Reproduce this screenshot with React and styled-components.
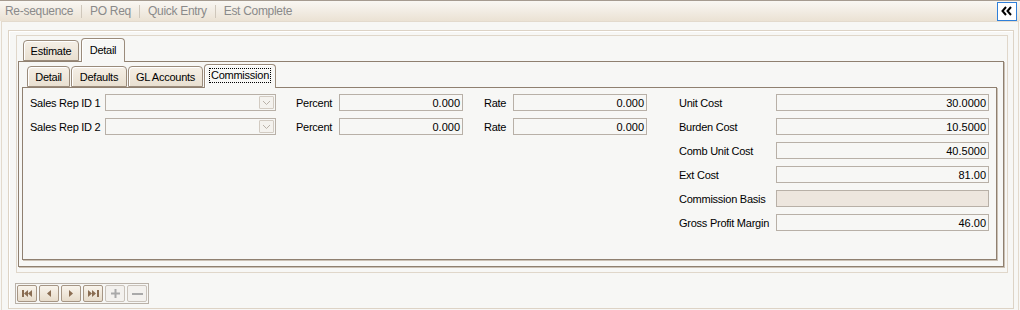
import * as React from "react"
import styled, { createGlobalStyle } from "styled-components"

const GlobalStyle = createGlobalStyle`
  html, body {
    margin: 0;
    padding: 0;
    background: #f7f7f5;
  }
  * {
    box-sizing: border-box;
  }
`

const Page = styled.div`
  width: 1020px;
  height: 310px;
  overflow: hidden;
  display: flex;
  flex-direction: column;
  background: #f7f7f5;
  font-family: "Liberation Sans", Arial, sans-serif;
  font-size: 11px;
  letter-spacing: -0.25px;
  color: #000;
`

const Toolbar = styled.div`
  height: 21px;
  flex: none;
  display: flex;
  align-items: center;
  padding-left: 5px;
  border-top: 1px solid #a59b90;
  background: linear-gradient(#f9f7f3, #ebe2d4);
  font-size: 12px;
  letter-spacing: -0.3px;
  color: #8a8a8a;
`

const ToolItem = styled.span`
  white-space: nowrap;
`

const ToolSep = styled.span`
  width: 1px;
  height: 13px;
  margin: 0 8px 0 8px;
  background: #cfc7bb;
`

const CollapseButton = styled.button`
  margin-left: auto;
  margin-right: 3px;
  width: 20px;
  height: 19px;
  padding: 0;
  display: flex;
  align-items: center;
  justify-content: center;
  border: 1px solid #2f7fd9;
  background: #ffffff;
`

const Frame = styled.div`
  flex: 1;
  margin: 0 1px;
  border: 1px solid #e3dacd;
  border-bottom: none;
  padding: 8px 4px 0 6px;
`

const GroupBox = styled.div`
  height: 279px;
  border: 1px solid #ddd3c5;
  box-shadow: inset 1px 1px 0 #ffffff;
  padding: 4px 5px 0 6px;
  display: flex;
  flex-direction: column;
`

const TabBox = styled.div`
  border: 1px solid #e0d7ca;
  margin-left: 1px;
  display: flex;
  flex-direction: column;
`

const TabStrip = styled.div`
  display: flex;
  align-items: flex-end;
  gap: ${(p) => p.$gap}px;
  padding-top: 2px;
  padding-left: ${(p) => p.$indent}px;
  position: relative;
  z-index: 1;
`

const Tab = styled.div`
  width: ${(p) => p.$w}px;
  height: ${(p) => (p.$active ? 24 : 21)}px;
  margin-bottom: ${(p) => (p.$active ? -1 : 0)}px;
  display: flex;
  align-items: center;
  justify-content: center;
  border: 1px solid #9a8b7b;
  border-bottom: ${(p) => (p.$active ? "none" : "1px solid #9a8b7b")};
  border-radius: 4px 4px 0 0;
  background: ${(p) =>
    p.$active ? "#f7f7f5" : "linear-gradient(#f5efe6, #e9e0d1)"};
  box-shadow: inset 1px 1px 0 #ffffff;
  padding-bottom: ${(p) => (p.$active ? 2 : 0)}px;
  white-space: nowrap;
`

const FocusLabel = styled.span`
  outline: 1px dotted #000;
  line-height: 13px;
  padding: 0 1px;
`

const TabPanel = styled.div`
  border: 1px solid #8f8070;
  box-shadow: 1px 1px 0 #cbc1b4;
  margin: ${(p) => p.$margin};
  padding: ${(p) => p.$pad};
  display: flex;
  flex-direction: column;
  background: #f7f7f5;
`

const Content = styled.div`
  height: 171px;
  padding: 6px 0 0 7px;
  display: flex;
  gap: 32px;
`

const LeftGrid = styled.div`
  display: grid;
  grid-template-columns: 75px 171px 63px 124px 50px 134px;
  grid-auto-rows: 17px;
  row-gap: 7px;
  align-content: start;
`

const RightGrid = styled.div`
  display: grid;
  grid-template-columns: 97px 213px;
  grid-auto-rows: 17px;
  row-gap: 7px;
  align-content: start;
`

const Label = styled.div`
  display: flex;
  align-items: center;
  padding-left: ${(p) => p.$indent || 0}px;
  white-space: nowrap;
`

const Field = styled.div`
  border: 1px solid #b8b0a7;
  background: ${(p) => (p.$filled ? "#ede6de" : "#f7f7f5")};
  display: flex;
  align-items: center;
  justify-content: flex-end;
  padding-right: 2px;
  white-space: nowrap;
  letter-spacing: 0;
`

const Combo = styled.div`
  border: 1px solid #b8b0a7;
  background: #f7f7f5;
  display: flex;
  align-items: center;
  justify-content: flex-end;
  padding-right: 1px;
`

const ComboButton = styled.div`
  width: 15px;
  height: 13px;
  border: 1px solid #d2cbc2;
  border-radius: 1px;
  background: #f4f2ee;
  display: flex;
  align-items: center;
  justify-content: center;
`

const NavGroup = styled.div`
  margin-top: 10px;
  align-self: flex-start;
  display: flex;
  gap: 2px;
  padding: 1px;
  border: 1px solid #b9b1a8;
`

const NavButton = styled.div`
  width: 20px;
  height: 17px;
  border: 1px solid ${(p) => (p.$disabled ? "#c9c2ba" : "#a69685")};
  border-radius: 2px;
  background: ${(p) =>
    p.$disabled ? "#f3f1ee" : "linear-gradient(#f9f4ec, #e7dccb)"};
  display: flex;
  align-items: center;
  justify-content: center;
`

const Chevron = () => (
  <svg width="9" height="6" viewBox="0 0 9 6">
    <path d="M1 1 L4.5 4.5 L8 1" fill="none" stroke="#b9b1a8" strokeWidth="1" />
  </svg>
)

const NavIcon = ({ kind }) => {
  const c = "#8a6d52"
  const g = "#a9a9a9"
  if (kind === "first")
    return (
      <svg width="11" height="7" viewBox="0 0 11 7">
        <rect x="0" y="0" width="2" height="7" fill={c} />
        <path d="M2 3.5 L6 0 L6 7 Z M6 3.5 L10 0 L10 7 Z" fill={c} />
      </svg>
    )
  if (kind === "prev")
    return (
      <svg width="4" height="7" viewBox="0 0 4 7">
        <path d="M0 3.5 L4 0 L4 7 Z" fill={c} />
      </svg>
    )
  if (kind === "next")
    return (
      <svg width="4" height="7" viewBox="0 0 4 7">
        <path d="M4 3.5 L0 0 L0 7 Z" fill={c} />
      </svg>
    )
  if (kind === "last")
    return (
      <svg width="11" height="7" viewBox="0 0 11 7">
        <path d="M8 3.5 L4 0 L4 7 Z M4 3.5 L0 0 L0 7 Z" fill={c} />
        <rect x="9" y="0" width="2" height="7" fill={c} />
      </svg>
    )
  if (kind === "add")
    return (
      <svg width="9" height="9" viewBox="0 0 9 9">
        <rect x="3.5" y="0" width="2" height="9" fill={g} />
        <rect x="0" y="3.5" width="9" height="2" fill={g} />
      </svg>
    )
  return (
    <svg width="11" height="2" viewBox="0 0 11 2">
      <rect x="0" y="0" width="11" height="2" fill={g} />
    </svg>
  )
}

const leftRows = [
  { label: "Sales Rep ID 1", percent: "0.000", rate: "0.000" },
  { label: "Sales Rep ID 2", percent: "0.000", rate: "0.000" },
]

const costRows = [
  { label: "Unit Cost", value: "30.0000" },
  { label: "Burden Cost", value: "10.5000" },
  { label: "Comb Unit Cost", value: "40.5000" },
  { label: "Ext Cost", value: "81.00" },
  { label: "Commission Basis", value: "", filled: true },
  { label: "Gross Profit Margin", value: "46.00" },
]

const App = () => (
  <Page>
    <GlobalStyle />
    <Toolbar>
      <ToolItem>Re-sequence</ToolItem>
      <ToolSep />
      <ToolItem>PO Req</ToolItem>
      <ToolSep />
      <ToolItem>Quick Entry</ToolItem>
      <ToolSep />
      <ToolItem>Est Complete</ToolItem>
      <CollapseButton>
        <svg width="12" height="10" viewBox="0 0 12 10">
          <path
            d="M5 1 L1.5 5 L5 9 M10 1 L6.5 5 L10 9"
            fill="none"
            stroke="#000"
            strokeWidth="2"
          />
        </svg>
      </CollapseButton>
    </Toolbar>
    <Frame>
      <GroupBox>
        <TabBox>
          <TabStrip $indent={6} $gap={2}>
            <Tab $w={56}>Estimate</Tab>
            <Tab $w={44} $active>
              Detail
            </Tab>
          </TabStrip>
          <TabPanel $margin="0 3px 5px 1px" $pad="0 6px 6px 3px">
            <TabStrip $indent={5} $gap={1}>
              <Tab $w={43}>Detail</Tab>
              <Tab $w={56}>Defaults</Tab>
              <Tab $w={75}>GL Accounts</Tab>
              <Tab $w={72} $active>
                <FocusLabel>Commission</FocusLabel>
              </Tab>
            </TabStrip>
            <TabPanel $margin="0" $pad="0">
              <Content>
                <LeftGrid>
                  {leftRows.map((r) => (
                    <React.Fragment key={r.label}>
                      <Label>{r.label}</Label>
                      <Combo>
                        <ComboButton>
                          <Chevron />
                        </ComboButton>
                      </Combo>
                      <Label $indent={20}>Percent</Label>
                      <Field>{r.percent}</Field>
                      <Label $indent={21}>Rate</Label>
                      <Field>{r.rate}</Field>
                    </React.Fragment>
                  ))}
                </LeftGrid>
                <RightGrid>
                  {costRows.map((r) => (
                    <React.Fragment key={r.label}>
                      <Label>{r.label}</Label>
                      <Field $filled={r.filled}>{r.value}</Field>
                    </React.Fragment>
                  ))}
                </RightGrid>
              </Content>
            </TabPanel>
          </TabPanel>
        </TabBox>
        <NavGroup>
          <NavButton>
            <NavIcon kind="first" />
          </NavButton>
          <NavButton>
            <NavIcon kind="prev" />
          </NavButton>
          <NavButton>
            <NavIcon kind="next" />
          </NavButton>
          <NavButton>
            <NavIcon kind="last" />
          </NavButton>
          <NavButton $disabled>
            <NavIcon kind="add" />
          </NavButton>
          <NavButton $disabled>
            <NavIcon kind="remove" />
          </NavButton>
        </NavGroup>
      </GroupBox>
    </Frame>
  </Page>
)

export default App
